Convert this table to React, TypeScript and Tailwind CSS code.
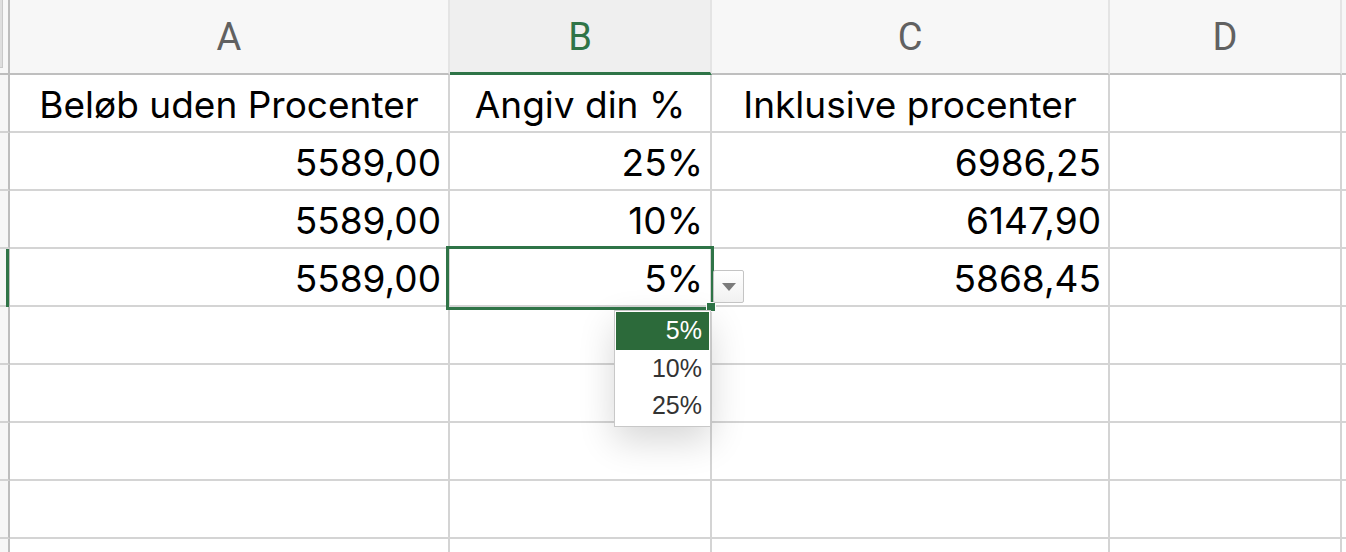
import React from 'react';

interface Column {
  key: string;
  label: string;
  width: string;
}

const columns: Column[] = [
  { key: 'A', label: 'A', width: 'w-[440px]' },
  { key: 'B', label: 'B', width: 'w-[262px]' },
  { key: 'C', label: 'C', width: 'w-[398px]' },
  { key: 'D', label: 'D', width: 'w-[232px]' },
];

const rows: (string | null)[][] = [
  ['Beløb uden Procenter', 'Angiv din %', 'Inklusive procenter', null],
  ['5589,00', '25%', '6986,25', null],
  ['5589,00', '10%', '6147,90', null],
  ['5589,00', '5%', '5868,45', null],
  [null, null, null, null],
  [null, null, null, null],
  [null, null, null, null],
  [null, null, null, null],
  [null, null, null, null],
];

const options = ['5%', '10%', '25%'];

export default function App() {
  return (
    <div className="relative w-[1346px] h-[552px] overflow-hidden bg-white font-['Inter',sans-serif]">
      {/* column headers */}
      <div className="flex h-[75px] bg-[#f7f7f7]">
        <div className="relative w-[10px] shrink-0 border-r-2 border-b-2 border-[#bdbdbd]">
          <div className="absolute left-0 top-0 w-[3px] h-[68px] bg-[#dedede] border-r border-b border-[#c9c9c9]" />
        </div>
        {columns.map((col) => {
          const active = col.key === 'B';
          return (
            <div
              key={col.key}
              className={`${col.width} shrink-0 flex items-center justify-center border-r-2 border-r-[#e4e4e4] ${
                active ? 'bg-[#efefef] border-b-[3px] border-b-[#2f7447] text-[#2f7447]' : 'border-b-2 border-b-[#bfbfbf] text-[#616161]'
              } font-['Roboto',sans-serif] text-[38px] pt-[2px]`}
            >
              {col.label}
            </div>
          );
        })}
        <div className="flex-1 border-b-2 border-[#bfbfbf]" />
      </div>

      {/* cell rows */}
      {rows.map((row, r) => (
        <div key={r} className="flex h-[58px] shrink-0">
          <div
            className={`w-[10px] shrink-0 bg-[#f6f6f6] border-r-2 border-b-2 border-[#d2d2d2] border-r-[#bdbdbd] ${
              r === 3 ? 'relative' : ''
            }`}
          >
            {r === 3 && <div className="absolute left-[6px] top-0 w-[3px] h-[58px] bg-[#2f7447]" />}
          </div>
          {columns.map((col, c) => {
            const value = row[c];
            const header = r === 0;
            return (
              <div
                key={col.key}
                className={`${col.width} shrink-0 flex items-end border-r-2 border-b-2 border-[#d4d4d4] pb-[6px] px-[7px] text-[37px] text-black leading-none ${
                  header ? 'justify-center' : 'justify-end'
                }`}
              >
                {value && <span className="leading-[40px] whitespace-nowrap">{value}</span>}
              </div>
            );
          })}
          <div className="flex-1 border-b-2 border-[#d4d4d4]" />
        </div>
      ))}

      {/* active cell B4 */}
      <div className="absolute left-[446px] top-[246px] w-[268px] h-[64px] border-[3px] border-[#2f7447] pointer-events-none" />
      <div className="absolute left-[706px] top-[302px] w-[10px] h-[10px] bg-[#2f7447] border border-white" />

      {/* data validation button */}
      <div className="absolute left-[713px] top-[270px] w-[31px] h-[33px] rounded-[2px] border border-[#c4c4c4] bg-gradient-to-b from-white to-[#f1f1f1] flex items-center justify-center">
        <svg width="14" height="8" viewBox="0 0 14 8">
          <path d="M0 0 L14 0 L7 8 Z" fill="#7b7b7b" />
        </svg>
      </div>

      {/* dropdown list */}
      <div className="absolute left-[614px] top-[310px] w-[97px] h-[117px] bg-white border border-[#c8c8c8] shadow-[0_14px_36px_rgba(0,0,0,0.16)] p-[1px] font-['Liberation_Sans',sans-serif]">
        {options.map((opt, i) => (
          <div
            key={opt}
            className={`h-[37.5px] flex items-center justify-end pr-[7px] text-[25px] ${
              i === 0 ? 'bg-[#2c6a3a] text-white' : 'text-[#333333]'
            }`}
          >
            {opt}
          </div>
        ))}
      </div>
    </div>
  );
}
